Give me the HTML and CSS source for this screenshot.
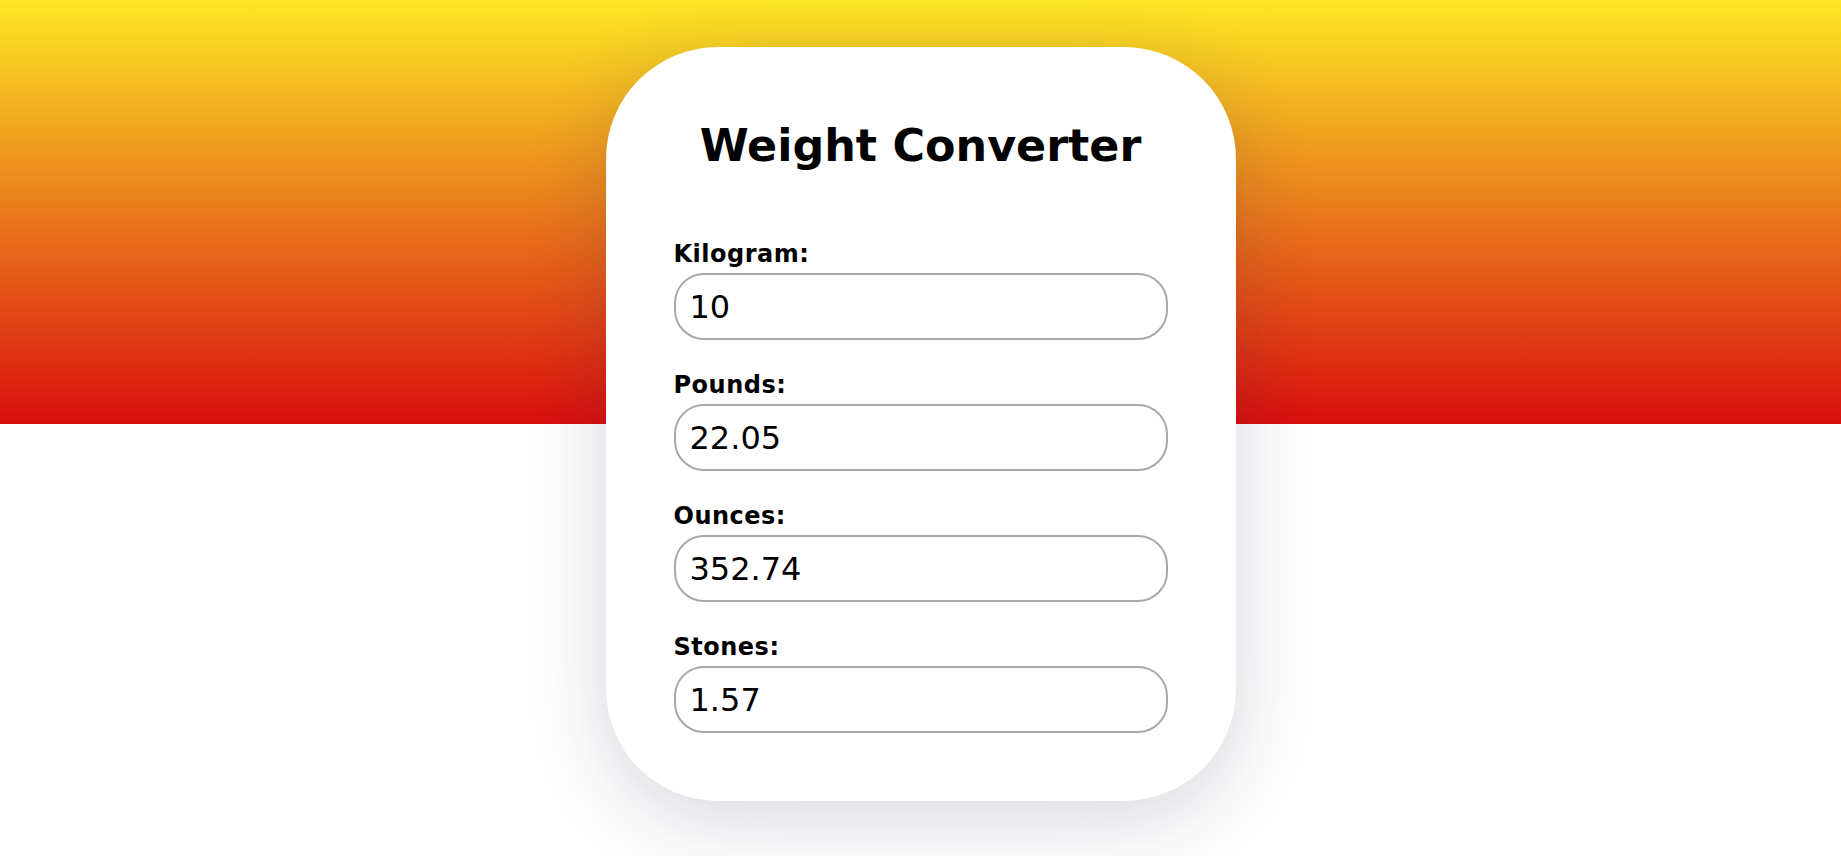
FILE: index.html
```html
<!DOCTYPE html>
<html lang="en">
<head>
<meta charset="utf-8">
<title>Weight Converter</title>
<link rel="stylesheet" href="styles.css">
</head>
<body>
  <main class="card">
    <h1 class="title">Weight Converter</h1>
    <div class="field">
      <label class="label" for="kg">Kilogram:</label>
      <input class="input" id="kg" type="text" value="10">
    </div>
    <div class="field">
      <label class="label" for="lb">Pounds:</label>
      <input class="input" id="lb" type="text" value="22.05">
    </div>
    <div class="field">
      <label class="label" for="oz">Ounces:</label>
      <input class="input" id="oz" type="text" value="352.74">
    </div>
    <div class="field">
      <label class="label" for="st">Stones:</label>
      <input class="input" id="st" type="text" value="1.57">
    </div>
  </main>
</body>
</html>
```

FILE: styles.css
```css
html, body {
  margin: 0;
  padding: 0;
}

body {
  min-height: 856px;
  font-family: Verdana, "DejaVu Sans", sans-serif;
  color: #000;
  background: #fff linear-gradient(to bottom, #fde825 0%, #ea7a1c 50%, #d90f0e 100%) top left / 100% 424px no-repeat;
  padding-top: 47px;
  box-sizing: border-box;
}

.card {
  box-sizing: border-box;
  width: 630px;
  margin: 0 auto;
  padding: 68px;
  background: #fff;
  border-radius: 112px;
  box-shadow: 0 18px 80px rgba(35, 35, 70, 0.18);
}

.title {
  margin: 5px 0 68px;
  font-size: 44.4px;
  line-height: 52px;
  font-weight: bold;
  text-align: center;
}

.field {
  display: flex;
  flex-direction: column;
  margin-bottom: 31px;
}

.field:last-child {
  margin-bottom: 0;
}

.label {
  font-size: 24px;
  line-height: 28px;
  font-weight: bold;
  letter-spacing: 0.5px;
  margin-bottom: 5px;
}

.input {
  box-sizing: border-box;
  width: 100%;
  height: 67px;
  margin: 0;
  padding: 0 14px;
  border: 2px solid #a9a9a9;
  border-radius: 30px;
  font-family: Verdana, "DejaVu Sans", sans-serif;
  font-size: 32px;
  color: #000;
  background: #fff;
  outline: none;
}
```
